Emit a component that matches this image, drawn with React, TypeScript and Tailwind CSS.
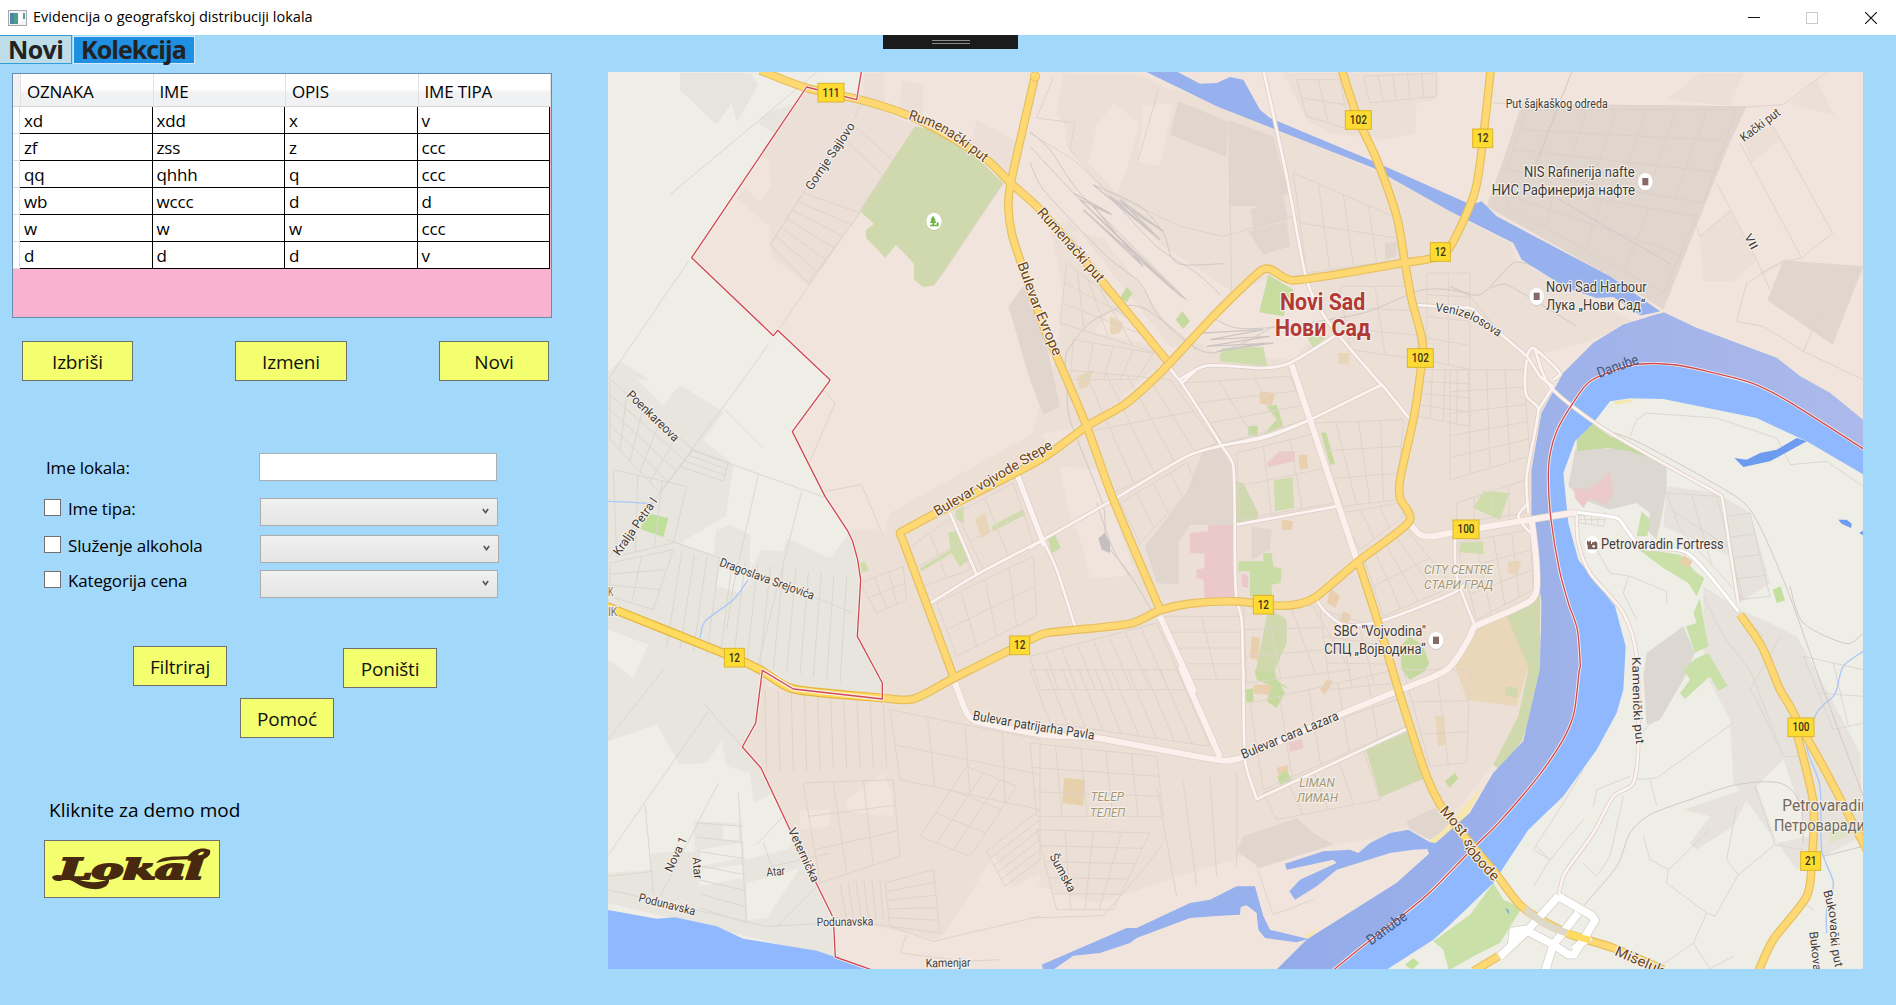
import React from "react";

/* ---------- map geometry helpers ---------- */

// Sheet origins: the map is surveyed in nine sheets, each with local coordinates.
const SHEETS: Record<string, [number, number]> = {
  A: [0, 0], B: [1290, 0], C: [2550, 0],
  D: [0, 930], E: [1290, 930], F: [2550, 930],
  G: [0, 1830], H: [1290, 1830], I: [2550, 1830],
};

function points(s: string): [number, number][] {
  let o: [number, number] = [0, 0];
  const out: [number, number][] = [];
  for (const t of s.trim().split(/\s+/)) {
    if (SHEETS[t]) o = SHEETS[t];
    else {
      const [x, y] = t.split(",").map(Number);
      out.push([x + o[0], y + o[1]]);
    }
  }
  return out;
}
const line = (s: string) => "M" + points(s).map((p) => p.join(" ")).join("L");
const poly = (s: string) => line(s) + "Z";

function curve(s: string) {
  const p = points(s);
  let d = `M${p[0][0]} ${p[0][1]}`;
  for (let i = 0; i < p.length - 1; i++) {
    const a = p[i - 1] ?? p[i], b = p[i], c = p[i + 1], e = p[i + 2] ?? c;
    // Control handles never reach further than a third of their own segment.
    const seg = Math.hypot(c[0] - b[0], c[1] - b[1]);
    const k1 = Math.min(1 / 7, seg / 3 / (Math.hypot(c[0] - a[0], c[1] - a[1]) || 1));
    const k2 = Math.min(1 / 7, seg / 3 / (Math.hypot(e[0] - b[0], e[1] - b[1]) || 1));
    d += `C${b[0] + (c[0] - a[0]) * k1} ${b[1] + (c[1] - a[1]) * k1} ${c[0] - (e[0] - b[0]) * k2} ${c[1] - (e[1] - b[1]) * k2} ${c[0]} ${c[1]}`;
  }
  return d;
}

// Street grid between four corners (clockwise), n lines one way and m the other.
function grid(s: string, n: number, m: number) {
  const [a, b, c, e] = points(s);
  const mix = (p: number[], q: number[], t: number) => [p[0] + (q[0] - p[0]) * t, p[1] + (q[1] - p[1]) * t];
  let d = "";
  for (let i = 0; i <= n && n > 0; i++) {
    const p = mix(a, b, i / n), q = mix(e, c, i / n);
    d += `M${p[0]} ${p[1]}L${q[0]} ${q[1]}`;
  }
  for (let i = 0; i <= m && m > 0; i++) {
    const p = mix(a, e, i / m), q = mix(b, c, i / m);
    d += `M${p[0]} ${p[1]}L${q[0]} ${q[1]}`;
  }
  return d;
}

const BORDER_WEST =
  "A 785,30 770,120 620,82 275,594 520,828 533,812 690,960 D 688,35 577,186 675,380 742,482 758,515 773,570 782,630 772,800 847,940 G 847,88 580,58 487,2 467,160 427,232 483,295 565,470 700,745 706,862 820,902";
const MIDSTREAM =
  "H 905,905 1000,828 1120,735 1200,668 1320,545 I 150,455 265,320 338,212 372,130 388,0 F 391,890 382,780 355,700 328,600 303,450 295,330 300,255 322,180 372,95 420,35 500,0 570,-17 680,-14 800,12 910,42 1020,98 1250,244";
const CITY = `${BORDER_WEST} ${MIDSTREAM} C 1250,30`;

const RIVER =
  "C 640,758 740,805 980,895 1050,950 F 1140,70 1250,160 1250,320 1070,215 920,145 640,88 540,86 480,95 430,160 375,215 340,310 355,460 385,570 495,710 527,830 520,960 I 500,130 440,240 340,380 235,480 130,640 0,765 H 1210,810 1070,900 740,900 830,810 1100,640 1200,550 1215,522 1320,430 I 130,310 220,215 270,0 F 275,700 245,450 245,300 275,130 340,10 C 430,850 520,795";
const CANAL =
  "B 335,30 430,30 510,72 560,70 600,52 640,60 665,105 690,150 720,175 1030,305 1290,420 C 65,435 95,425 140,470 480,650 630,755 575,770 490,712 440,715 350,685 215,600 190,550 0,455 B 1030,325 560,140";
const LAKES = [
  "H 765,582 880,545 960,540 985,550 1020,520 1080,490 1135,480 1200,518 1235,522 1200,560 1192,538 1150,540 1080,550 920,600 860,650 795,690 778,665 810,630 920,580 910,570 770,600",
  "H 35,885 290,775 320,775 480,700 540,690 620,650 675,650 700,740 720,780 835,808 800,818 705,805 685,780 680,730 650,707 632,712 630,735 570,738 480,745 320,805 300,820 210,850 130,858 70,900 40,900",
];
const WATER_OUT = [
  "G 20,720 170,747 225,743 350,770 430,807 650,843 706,862 830,905 20,905",
  "F 853,265 890,270 930,250 980,240 1040,205 1070,215 960,275 880,292",
  "F 1165,450 1190,450 1205,462 1203,475 1175,462",
  "F 1228,490 1245,480 1245,500",
  "I 165,715 175,720 178,735",
];

type Area = [string, string];
const AREAS: Area[] = [
  // settlements west of the border
  ["#e8e5de", "D 24,0 100,20 190,105 240,45 372,128 310,210 400,285 378,440 240,520 340,555 350,480 390,465 450,495 450,600 485,540 550,545 560,505 690,565 740,500 758,515 782,630 772,800 847,940 G 847,88 580,58 487,2 467,160 427,232 483,295 520,370 460,400 450,310 380,290 365,215 320,280 240,285 170,165 24,215"],
  ["#efeee6", "D 360,560 450,600 450,640 420,670 350,650"],
  ["#efeee6", "D 24,780 145,825 100,925 24,870"],
  ["#e6e4dd", "A 240,40 450,40 475,75 410,188 395,130 350,195 240,90"],
  ["#e6e4dd", "A 500,160 590,130 560,250 475,190"],
  ["#e8e5de", "A 30,930 60,905 150,960 30,960"],
  ["#e8e5de", "G 280,455 420,460 435,570 560,540 610,480 690,745 G 706,862 400,790 24,700 24,610 150,600 155,550 285,545"],
  ["#efeee6", "G 295,600 425,585 430,625 300,650"],
  ["#efeee6", "G 370,465 415,465 415,510 370,510"],
  ["#efeee6", "G 440,640 600,595 500,745 440,750"],
  ["#efeee6", "G 300,540 425,520 425,565 300,590"],
  // Sajlovo
  ["#ebdfd7", "A 600,110 640,90 780,125 950,200 875,320 780,450 625,680 515,590 510,500 410,415 440,385 480,430 512,380 505,300 480,290"],
  ["#ebdfd7", "A 790,40 850,40 855,130 790,115"],
  ["#ebdfd7", "A 905,60 970,75 970,190 900,150"],
  ["#ebdfd7", "A 1130,180 1255,250 1232,350 1110,270"],
  // central urban area
  ["#ebdfd6", "B 60,500 120,480 420,860 600,900 1170,870 1290,600 1280,440 700,190 440,90 330,90 B 100,40 80,160 180,310 250,390 500,560 600,640 690,620 350,960 E 170,170 60,235 D 1320,180 870,430 850,500 830,480 750,480 782,630 772,800 847,940 G 847,88 500,50 487,2 467,160 427,232 483,295 700,745 900,790 1010,810 1140,715 1320,650 H 200,700 640,560 1240,480 I 130,280 240,130 F 275,700 245,450 245,300 300,80 C 240,890 400,850 560,790 380,700 200,600 0,440 B 1120,560 900,640 690,620 500,600"],
  ["#ebdfd6", "B 60,500 120,510 410,900 E 170,170 0,200 B 80,890 100,700"],
  ["#ebdfd6", "B 100,45 330,45 420,90 700,190 760,300 800,650 600,700 440,600 250,420 110,260"],
  ["#f1e4dc", "B 250,130 330,190 290,330 260,400 175,310 200,200"],
  ["#f1e4dc", "B 340,140 430,130 390,320 325,305"],
  ["#f1e4dc", "B 0,210 60,250 130,300 250,420 400,560 600,690 470,840 440,830 300,640 150,440 0,280"],
  ["#f1e4dc", "B 600,700 730,650 790,670 840,670 890,780 790,900 560,880 480,830"],
  ["#f1e4dc", "B 190,820 390,860 400,890 300,780 240,750"],
  ["#ebdfd6", "B 760,40 1220,40 1220,120 1160,130 1155,220 1060,240 900,220 830,180"],
  ["#ebdfd6", "B 820,280 1090,390 1270,450 1240,540 1120,600 830,650"],
  ["#f1e4dc", "E 90,290 210,300 310,600 280,620 180,625 160,540 110,400"],
  ["#f1e4dc", "G 740,390 850,310 875,370 880,440 740,425"],
  ["#f1e4dc", "G 600,420 690,420 690,470 600,480"],
  ["#f1e4dc", "G 1095,700 1180,555 1240,650 1320,610 H 20,760 400,690 760,560 860,600 740,730 1050,560 1190,545 1090,640 740,900 G 830,900 706,862 705,745 1020,810"],
  ["#f1e4dc", "H 720,800 1240,480 1190,460 1100,480 960,540 820,600 760,700"],
  // industry
  ["#e1d6ce", "A 1225,740 1270,680 1320,760 E 90,110 40,135 B 0,960"],
  ["#e1d6ce", "B 445,125 592,185 590,292 420,225"],
  ["#e1d6ce", "B 598,182 730,230 775,400 690,440 598,438"],
  ["#e1d6ce", "B 655,515 770,485 780,560 700,585"],
  ["#e1d6ce", "B 660,450 760,410 775,480 670,510"],
  ["#e1d6ce", "B 1065,550 1100,545 1100,590 1065,600"],
  ["#e1d6ce", "C 215,133 890,140 835,260 640,750 480,650 110,440 170,270"],
  ["#e1d6ce", "C 1000,602 1240,620 1148,855 952,722"],
  ["#ebdfd6", "C 750,530 840,450 920,600 850,665 760,665"],
  ["#ebdfd6", "C 650,120 750,40 880,40 840,138"],
  ["#ebdfd6", "C 1020,130 1100,60 1155,170"],
  ["#ebdfd6", "C 870,220 970,200 990,240 905,310"],
  ["#ebdfd6", "C 60,490 180,550 200,590 60,540"],
  ["#e1d6ce", "E 520,240 575,235 610,300 612,465 480,465 445,520 445,645 380,640 345,530 470,370"],
  ["#e1d6ce", "E 665,470 725,480 720,540 665,570"],
  ["#e1d6ce", "H 640,500 800,445 850,490 910,525 690,595 620,545"],
  ["#e1d6ce", "H 1130,455 1215,415 1260,470 1200,510 1140,480"],
  // across the river
  ["#dcd7d1", "F 375,240 440,235 540,240 650,290 650,360 635,440 620,510 590,480 600,430 560,400 480,420 400,390 355,350"],
  ["#e7e3dc", "F 650,350 800,370 900,430 960,640 870,700 840,560 640,470"],
  ["#e7e3dc", "F 760,650 870,720 960,760 1040,800 1130,960 I 1230,250 1240,500 1040,600 850,340 840,150 760,0"],
  ["#dcd7d1", "F 700,770 735,850 700,930 I 630,150 590,165 580,20 F 590,850"],
  ["#e7e3dc", "I 700,420 910,350 850,470 740,540 720,520 780,440"],
  ["#f0efe7", "I 920,350 1000,270 1080,500 980,520"],
  // water meadows and parks
  ["#d0d9ae", "A 945,200 1000,210 1100,265 1210,370 1030,640 1000,677 970,682 942,660 942,612 888,555 856,594 798,535 798,510 822,493 778,453"],
  ["#c9dca0", "B 715,645 790,690 760,770 688,758"],
  ["#c6daa0", "B 290,682 308,700 290,728 270,715"],
  ["#c6daa0", "B 457,755 480,785 460,808 437,780"],
  ["#cfdcab", "B 575,865 700,862 712,920 568,905"],
  ["#cfdcab", "B 830,830 890,830 850,865"],
  ["#e9d6b8", "B 240,770 280,790 270,820 240,825"],
  ["#e9d6b8", "B 925,880 960,880 955,915 925,910"],
  ["#e9d6b8", "E 140,20 190,0 175,50 150,60"],
  ["#e9cfae", "E 690,65 735,70 725,108 688,100"],
  ["#c6daa0", "E 710,110 740,105 760,170 700,195 740,150"],
  ["#c6daa0", "E 655,170 683,168 683,200 655,195"],
  ["#c6daa0", "E 873,190 888,188 915,283 900,285"],
  ["#ebcaca", "E 710,280 750,245 795,245 795,275 715,292"],
  ["#e9cfae", "E 805,255 830,255 835,295 810,300"],
  ["#d0d9ae", "E 618,335 640,340 685,430 680,455 618,465"],
  ["#cfdcab", "E 732,332 788,323 792,415 735,425"],
  ["#ebc8c9", "E 535,465 615,465 618,682 525,685 520,630 498,625 500,600 522,595 525,552 480,550 480,490 535,485"],
  ["#c9dca5", "E 700,550 725,550 730,590 755,598 752,640 725,645 725,680 660,680 660,605 625,605 625,575 700,575"],
  ["#ebc8c9", "E 635,610 655,620 655,655 635,650"],
  ["#e9cfae", "E 755,450 790,455 785,480 755,480"],
  ["#d0d9ae", "E 715,715 770,750 770,820 735,900 740,930 780,960 675,915"],
  ["#e9cfae", "E 665,800 690,805 685,870 660,865"],
  ["#c6daa0", "H 675,0 730,10 765,70 740,115 710,95 725,50 680,30"],
  ["#c6daa0", "H 645,60 670,55 670,95 650,100"],
  ["#e9cfae", "H 672,45 725,45 720,75 672,72"],
  ["#e9cfae", "H 870,60 890,30 908,35 885,75"],
  ["#e9cfae", "E 900,655 930,680 915,715 892,700"],
  ["#e9cfae", "E 940,725 962,735 955,760 930,755"],
  ["#c6daa0", "E 1110,830 1140,800 1180,830 1197,880 1185,905 1140,930 1115,900"],
  ["#ebcaca", "H 775,220 815,208 820,235 780,248"],
  ["#e9cfae", "H 740,295 772,285 775,305 745,315"],
  ["#c6daa0", "H 742,320 770,303 785,330 750,345"],
  ["#e7d0ac", "H 102,325 165,330 160,408 97,400"],
  ["#d0d9ae", "H 1008,240 1135,185 1185,325 1050,383"],
  ["#e9d6b8", "H 1215,140 1243,140 1245,225 1225,230"],
  ["#c6daa0", "H 1245,335 1275,310 1285,325 1258,355"],
  ["#f7e6ae", "H 1195,520 1240,480 1320,390 I 100,350 50,440 H 1215,522"],
  ["#f7e6ae", "H 835,808 825,795 870,775"],
  ["#cfdcab", "D 1065,425 1090,410 1092,460 1070,450"],
  ["#e9d6b8", "D 1125,450 1155,430 1170,490 1145,505"],
  ["#cfdcab", "D 1175,470 1270,418 1275,435 1180,485"],
  ["#cfdcab", "D 1045,490 1078,482 1105,570 1080,592 1055,550 965,605 960,595 1052,540"],
  ["#cfdcab", "D 780,580 795,575 805,602 785,610"],
  ["#bfe09a", "D 140,430 205,445 190,502 120,478"],
  ["#c9dca5", "E 55,510 75,495 92,535 65,552"],
  // right bank quay
  ["#d0d9ae", "F 170,740 250,690 270,660 270,960 I 215,215 150,300 130,285 205,140 235,0"],
  ["#ead6b9", "F 15,880 70,775 170,740 235,890 I 200,110 50,90 20,0"],
  ["#d0d9ae", "I 170,50 205,55 200,85 165,75"],
  ["#cfdcab", "F 100,365 178,370 150,450 70,415"],
  ["#cfdcab", "F 30,520 100,515 100,553 28,548"],
  ["#e9d6b8", "F 175,575 215,575 200,615 172,610"],
  ["#c6daa0", "F 425,160 480,200 560,230 640,280 540,245 470,235 380,245 380,210"],
  ["#ecc9ca", "F 372,355 410,360 470,320 480,300 485,340 490,370 465,405 420,385 400,415 375,385"],
  ["#f7e6ae", "F 490,95 550,88 545,96 500,105"],
  ["#c9e0a8", "F 575,425 600,450 592,500 560,500"],
  ["#c9e0a8", "F 560,535 690,555 740,610 763,625 740,680 715,640 640,595"],
  ["#e9cfae", "F 700,555 728,575 715,595 690,580"],
  ["#c9e0a8", "F 750,685 762,760 775,830 735,850 708,770 740,760 730,730"],
  ["#c9e0a8", "F 735,868 775,850 833,950 I 833,48 805,63 780,20 705,88 690,70 720,30 700,0"],
  ["#c2e09c", "F 968,660 992,650 1005,692 980,700"],
  ["#c9e0a8", "H 1320,735 I 130,640 160,690 215,715 150,820 70,860 0,900 H 1255,897 1240,840 1210,815"],
  ["#c2e09c", "H 1125,885 1150,865 1168,880 1145,900"],
  ["#dde3c4", "I 1140,455 1210,450 1215,490 1140,520"],
];

const STREETS_CITY = [
  grid("D 780,640 910,590 920,690 830,730", 3, 2),
  grid("D 920,540 1060,440 1110,600 970,650", 2, 2),
  grid("D 1070,430 1240,340 1300,520 1150,600", 2, 2),
  grid("D 1010,700 1300,560 1310,740 1070,860", 4, 2),
  grid("G 495,60 850,105 860,290 500,310", 9, 0),
  grid("G 610,340 880,330 900,560 660,640", 3, 3),
  grid("G 870,120 1320,210 1320,420 900,330", 4, 2),
  grid("G 960,500 1100,290 1250,350 1110,560", 3, 3),
  grid("G 1160,545 1320,420 1320,570 1215,650", 1, 5),
  grid("G 855,640 1000,600 1020,790 870,770", 1, 5),
  grid("G 720,640 840,630 850,750 740,750", 5, 0),
  grid("E 0,860 380,760 470,960 30,960", 8, 1),
  grid("H 0,0 440,0 540,230 60,160", 9, 1),
  grid("H 0,220 380,260 400,440 20,440", 5, 3),
  grid("H 20,480 360,490 250,720 80,720", 4, 5),
  grid("H 380,350 620,310 620,590 440,680", 3, 0),
  grid("E 100,0 420,30 560,220 250,370", 5, 2),
  grid("E 270,400 470,280 500,340 330,520", 4, 1),
  grid("E 460,40 780,20 840,150 580,220", 3, 3),
  grid("E 620,250 860,190 910,400 630,450", 3, 2),
  grid("E 850,160 1120,150 1100,390 940,410", 4, 3),
  grid("E 930,430 1110,400 1120,440 990,540", 3, 1),
  grid("E 640,700 850,710 960,900 650,940", 3, 3),
  grid("E 400,740 630,740 640,930 480,930", 2, 4),
  grid("E 1000,560 1130,480 1270,650 1060,740", 4, 2),
  grid("E 870,720 1040,770 1100,940 900,960", 3, 3),
  grid("E 1170,0 1320,0 1320,170 1160,140", 4, 4),
  grid("F 0,0 220,0 240,260 0,330", 4, 5),
  grid("F 20,400 230,330 230,430 20,460", 4, 1),
  grid("F 20,520 240,480 250,660 80,750", 4, 3),
  grid("H 660,100 1100,0 1130,170 700,360", 5, 2),
  grid("H 700,370 1000,240 1050,390 740,450", 4, 1),
  grid("H 1120,0 1320,0 1310,280 1200,290", 2, 3),
  grid("B 790,340 1090,470 1110,600 830,640", 4, 2),
  grid("B 110,610 240,710 380,880 90,790", 4, 3),
  grid("B 130,840 370,880 320,960 120,960", 4, 1),
  grid("B 930,680 1140,680 1170,900 960,870", 2, 3),
  grid("B 1190,640 1320,640 1320,930 1190,900", 2, 4),
  grid("B 800,60 930,60 960,210 830,170", 2, 2),
  grid("B 1000,50 1220,40 1220,110 1020,130", 5, 1),
  grid("A 610,400 780,460 625,670 510,555", 1, 6),
  line("A 755,190 875,300"),
  line("A 725,230 845,345"),
  line("A 790,120 760,180 610,400 510,555"),
  line("A 875,320 535,810"),
  line("A 1210,370 1000,680"),
  line("D 670,60 705,100 630,275"),
  line("D 675,365 785,345 850,500"),
  line("B 385,90 325,300"),
  line("B 0,220 130,300 240,400 450,500 580,530 790,470"),
  line("B 595,180 605,700"),
  line("B 70,55 20,175 135,190 120,270 230,400"),
  line("C 870,250 1055,595 1148,520 970,200"),
  line("C 800,370 915,590 960,690"),
  line("C 1000,605 890,670 860,785 940,800 1060,875 1240,960"),
  line("C 1060,875 1105,770"),
  line("C 930,640 1000,605 1055,595"),
  line("C 130,130 215,133 890,142 1000,135 1130,37"),
  line("C 740,500 750,530 840,455"),
  line("C 0,680 60,710 150,820"),
  line("G 705,745 870,770 1000,815 1320,740"),
  line("G 920,795 900,850 1100,875 1200,870"),
  line("H 0,745 220,738 340,600 400,520"),
  line("H 680,590 730,735 850,690"),
];
const STREETS_PLANT = [
  grid("C 230,150 860,150 760,430 170,330", 7, 3),
  grid("C 170,370 740,470 640,700 170,440", 4, 2),
];
const STREETS_OUT = [
  grid("D 30,30 280,240 180,370 30,210", 5, 4),
  grid("D 280,240 385,280 370,335 240,290", 1, 3),
  grid("D 40,300 260,350 220,520 50,560", 3, 1),
  grid("D 30,580 220,540 160,720 30,680", 2, 3),
  grid("D 245,550 740,620 720,940 200,830", 13, 0),
  grid("G 290,460 430,470 440,760 300,715", 0, 6),
  line("A 650,38 210,405"),
  line("A 265,605 30,950 D 20,30"),
  line("A 505,855 430,960 D 175,375 30,560"),
  line("D 375,120 490,235"),
  line("D 270,240 680,385"),
  line("D 475,315 400,650 380,780"),
  line("D 605,365 470,900"),
  line("D 200,510 360,565 760,730"),
  line("G 325,125 25,555"),
  line("G 24,210 190,0"),
  line("G 310,100 430,235"),
  line("G 355,340 180,680"),
  line("G 135,405 160,670"),
  line("G 24,660 500,770 700,760"),
  line("G 24,620 160,605"),
  line("G 415,370 440,760"),
  line("G 550,440 470,525"),
  line("G 490,520 515,590 690,550"),
  line("G 530,770 660,640"),
  grid("F 380,440 470,430 460,470 390,460", 4, 2),
  grid("F 650,370 800,380 880,690 690,480", 2, 2),
  grid("F 830,440 900,430 960,680 870,690", 1, 4),
  line("F 540,200 560,150 590,130 800,145 980,205 1020,285 1130,275 1240,350"),
  line("F 440,540 480,610 540,620 650,665 650,700"),
  line("F 535,620 520,670 560,750"),
  line("F 760,680 820,800 900,900 I 1000,260 1060,260"),
  line("F 990,800 900,960 I 920,90 980,220"),
  line("I 560,200 640,130 700,0"),
  line("I 550,330 620,325 850,160"),
  line("I 600,330 620,405"),
  line("I 540,320 440,360 430,410"),
  line("I 520,380 480,560 440,620 400,580"),
  line("I 260,530 300,570 400,450"),
  line("I 400,300 340,400 250,540 300,570 250,650"),
  line("I 580,500 600,570 655,600 650,640 770,730 730,820 620,897"),
  line("I 655,600 780,480"),
  line("I 770,730 795,740 865,615 830,570 860,410"),
  line("I 865,615 975,525 1060,540"),
  line("I 975,525 915,350"),
  line("I 730,820 780,897 850,860"),
  line("I 1060,700 1090,720"),
  line("F 870,730 900,760 940,800"),
  grid("F 1060,860 1240,900 1240,1060 1150,1080", 2, 2),
];
const RAIL = [
  "B 0,215 60,270 150,400 470,720",
  "B 0,260 160,430 440,700 470,720",
  "B 0,310 40,390 230,590 330,670 380,760 460,840 540,880 640,850 730,800",
  "B 190,375 330,440 400,520 440,610 580,612",
  "B 230,400 380,560 500,640 570,705",
  "B 110,960 110,880 180,790 280,740 340,745 420,800 500,870",
  "B 540,770 620,805 760,800 1000,760 1180,690 1320,700",
  "C 0,680 90,705 190,610 250,620 310,645",
  "C 120,685 170,675 380,800",
  "C 365,37 250,330",
  "C 320,415 665,615",
  "E 110,40 120,150 220,410 230,520 290,600 370,730",
  "E 200,400 250,540 300,620",
  "F 460,180 560,215 790,340 900,420 1000,630 1120,960 I 1240,380",
  "F 1020,650 1060,760 1190,822 1240,790",
  "I 395,715 500,590 540,490 600,435 720,390 860,345 990,340 1050,400 1060,520",
  "I 1120,560 1240,530",
];
const YARD = [
  "B 130,400 240,460 150,420 460,715 200,470 430,690 160,450 340,620 190,440 245,465",
  "B 190,375 390,540 270,420 400,515 240,410 380,530",
  "B 520,820 700,810 540,840 720,830 530,860 730,850 560,875 700,850",
];

const WHITE_THIN = [
  "B 410,910 430,940 E 455,40 575,228 610,290 615,600 620,690 635,750 640,960 H 640,0 645,270 677,380 680,388 690,384 1135,175",
  "E 455,40 500,0 B 450,960 530,918 700,925 780,910 920,825",
  "B 700,30 770,350 830,660 890,780 1040,960 E 1060,50 1145,155",
  "E 0,535 40,510 250,390 470,260 575,228 700,205 840,150 1055,45",
  "E 575,228 720,195 840,150",
  "E -40,300 40,510 80,600 135,770",
  "E 620,465 920,410",
  "E 860,690 880,720 940,765 1050,755 1270,670 1320,630",
  "F 15,500 20,620 75,770",
  "D 1050,430 1130,615",
  "D 1245,310 1330,530",
  "D 985,705 1130,615 1330,510",
  "F 255,-60 300,50 450,170 620,270 800,370 815,380 840,540 865,700",
  "F 380,430 385,520 420,610 520,730 560,860 I 565,220 550,340 490,380 430,490 345,610 325,680",
  "B 1150,735 1220,740 1320,745 C 90,770 160,830 230,890 270,950 F 310,50",
  "C 230,890 250,865 330,940 310,960",
  "C 230,900 225,955 F 230,80 265,120 230,320 235,430",
  "F 265,120 310,50",
  "F 235,400 205,440 240,490",
];
const WHITE_WIDE = [
  "B 785,915 E 840,150 980,570",
  "E 1138,460 1170,495 1210,500 F 0,490 240,450 380,428",
  "E 390,740 490,960 H 455,0 570,262",
  "G 1065,40 1100,130 1130,155 1330,195 H 200,205 570,272 640,262 930,135 1100,65 1250,0 E 1320,800 F 75,770 245,690 260,600 245,450",
];
const YELLOW = [
  "A 480,32 620,85 780,120 920,165 1040,225 1160,300 1232,370 1320,450 B 220,670 410,902",
  "A 1305,50 1232,370 1225,440 1235,520 1260,600 B 40,800 80,890 E 170,170 250,390 390,720",
  "D 1062,925 908,510 900,490 920,478 1000,435 1320,270 E 170,170 290,100 400,0 B 550,770 690,635 720,628 790,662 1120,610 1230,590 1270,545 C 75,395 100,230 122,30",
  "B 935,30 985,180 1040,300 1100,470 1125,610 1145,720 1178,850 1170,950 E 1150,150 1110,330 1110,385 1138,455 985,575 860,680 810,702 740,708 620,695 480,702 390,722 300,762 50,790 0,810 D 1259,827 1062,925 G 940,88 850,85",
  "E 985,575 1045,760 1105,960 H 1140,170 1190,320 1240,420 I 60,520 140,615 220,715 350,790 490,835 640,900",
  "F 870,735 935,830 990,960 I 1020,110 1053,173 1130,310 1250,540",
  "I 1040,190 1090,400 1085,574 1070,680 970,810 925,905",
  "I 145,860 70,905",
];
const INTERCHANGE = [
  "I 325,680 225,790 150,860",
  "I 325,680 425,738 435,752 372,855 355,855 310,825 225,780 190,785 185,830",
  "I 385,730 310,825 285,905",
  "I 420,800 370,840",
];

/* ---------- map labels ---------- */

type LabelProps = {
  s: string; x: number; y: number; w: number; t: string;
  size?: number; rot?: number; fill?: string; weight?: number; italic?: boolean;
};
function Label({ s, x, y, w, t, size = 38, rot = 0, fill = "#403d3b", weight = 400, italic }: LabelProps) {
  const [ox, oy] = SHEETS[s];
  return (
    <text
      transform={`translate(${x + ox} ${y + oy}) rotate(${rot})`}
      textLength={w} lengthAdjust="spacingAndGlyphs" fontSize={size} fill={fill}
      fontWeight={weight} fontStyle={italic ? "italic" : "normal"}
      stroke="#f7f0ea" strokeWidth={7} strokeLinejoin="round" paintOrder="stroke"
    >
      {t}
    </text>
  );
}
function PathLabel({ id, p, t, size = 38, fill = "#403d3b", halo = "#f7f0ea", len }: { id: string; p: string; t: string; size?: number; fill?: string; halo?: string; len: number }) {
  return (
    <>
      <path id={id} d={curve(p)} fill="none" />
      <text fontSize={size} fill={fill} stroke={halo} strokeWidth={7} strokeLinejoin="round" paintOrder="stroke">
        <textPath href={`#${id}`} textLength={len} lengthAdjust="spacingAndGlyphs">{t}</textPath>
      </text>
    </>
  );
}
function Shield({ s, x, y, t }: { s: string; x: number; y: number; t: string }) {
  const [ox, oy] = SHEETS[s];
  const w = t.length === 3 ? 78 : 60;
  return (
    <g transform={`translate(${x + ox} ${y + oy})`}>
      <rect x={-w / 2} y={-28} width={w} height={56} fill="#fddb33" stroke="#dcb42c" strokeWidth={3} />
      <text x={-(t.length * 17) / 2} y={12} textLength={t.length * 17} lengthAdjust="spacingAndGlyphs" fontSize={36} fontWeight={500} fill="#3a3318">{t}</text>
    </g>
  );
}
function Poi({ s, x, y }: { s: string; x: number; y: number }) {
  const [ox, oy] = SHEETS[s];
  return (
    <g transform={`translate(${x + ox} ${y + oy})`}>
      <ellipse rx={23} ry={28} fill="#d8ccc5" cy={2} />
      <ellipse rx={22} ry={26} fill="#fff" />
      <rect x={-9} y={-11} width={18} height={22} fill="#866a66" />
    </g>
  );
}

function CityMap() {
  const brown = "#6b4413";
  const olive = "#a09878";
  return (
    <svg className="block h-[897px] w-[1255px]" viewBox="24 37 3765 2691" preserveAspectRatio="none" fontFamily="Roboto, sans-serif">
      <defs>
        <clipPath id="city"><path d={poly(CITY)} /></clipPath>
        <linearGradient id="tint" x1="0" y1="0" x2="1" y2="0">
          <stop offset="0" stopColor="#92abe9" />
          <stop offset="1" stopColor="#acb9ea" />
        </linearGradient>
      </defs>
      <rect x="24" y="37" width="3765" height="2691" fill="#efeee6" />
      <path d={poly(CITY)} fill="#f1e4dc" />
      {AREAS.map(([c, p], i) => <path key={i} d={poly(p)} fill={c} />)}
      <g fill="none" strokeWidth={3}>
        <path d={STREETS_CITY.join("")} stroke="#dfd3ca" />
        <path d={STREETS_PLANT.join("")} stroke="#dbcfc7" />
        <path d={STREETS_OUT.join("")} stroke="#dad7d0" />
        <g stroke="#d0c9c6">{RAIL.map((p, i) => <path key={i} d={curve(p)} />)}</g>
        <g stroke="#cdc5c4" strokeWidth={4}>{YARD.map((p, i) => <path key={i} d={line(p)} />)}</g>
      </g>
      <path d={poly("E 205,505 225,490 240,520 240,550 215,540")} fill="#c6bfc2" />
      <path d={poly(RIVER)} fill="#8fb8ff" />
      <path d={poly(RIVER)} fill="url(#tint)" clipPath="url(#city)" />
      <path d={poly(CANAL)} fill="#97b1ee" />
      {LAKES.map((p, i) => <path key={i} d={poly(p)} fill="#97b0ee" />)}
      {WATER_OUT.map((p, i) => <path key={i} d={poly(p)} fill={i === 0 ? "#90b8ff" : "#6d9bf0"} />)}
      <g fill="none" stroke="#a9c8f8" strokeWidth={4}>
        <path d={curve("D 24,395 100,398 160,402")} />
        <path d={curve("D 445,630 400,690 315,755 300,805")} />
        <path d={curve("F 1240,845 1180,890 1160,960 I 1150,80 1100,130 1070,230 1110,350 1115,540 1150,640 1130,720 1130,790")} />
      </g>
      <g fill="none" strokeLinejoin="round">
        <g stroke="#ddd0c9" strokeWidth={13}>{WHITE_THIN.map((p, i) => <path key={i} d={curve(p)} />)}</g>
        <g stroke="#ddd0c9" strokeWidth={22}>{WHITE_WIDE.map((p, i) => <path key={i} d={curve(p)} />)}</g>
        <g stroke="#fcf4f1" strokeWidth={8}>{WHITE_THIN.map((p, i) => <path key={i} d={curve(p)} />)}</g>
        <g stroke="#fcf0ed" strokeWidth={18}>{WHITE_WIDE.map((p, i) => <path key={i} d={curve(p)} />)}</g>
        <path d={curve("F 380,428 500,445 530,480 580,535 715,552 865,725")} stroke="#dcd8d2" strokeWidth={14} />
        <path d={curve("F 380,428 500,445 530,480 580,535 715,552 865,725")} stroke="#fff" strokeWidth={9} />
        <path d={line("C 570,770 640,757")} stroke="#f1e4dc" strokeWidth={5} />
        <path d={curve("D 20,710 403,864 480,900 G 580,58 850,85")} stroke="#e3b63f" strokeWidth={27} />
        <path d={curve("D 20,710 403,864 480,900 G 580,58 850,85")} stroke="#ffdb60" strokeWidth={20} />
        <path d={line("G 487,2 580,58 850,88")} stroke="#fbe9cf" strokeWidth={12} />
        <g stroke="#e6bf5e" strokeWidth={26}>{YELLOW.map((p, i) => <path key={i} d={curve(p)} />)}</g>
        <g stroke="#fdd873" strokeWidth={19}>{YELLOW.map((p, i) => <path key={i} d={curve(p)} />)}</g>
        <g stroke="#d6d2ca" strokeWidth={28}>{INTERCHANGE.map((p, i) => <path key={i} d={line(p)} />)}</g>
        <g stroke="#fff" strokeWidth={23}>{INTERCHANGE.map((p, i) => <path key={i} d={line(p)} />)}</g>
        <path d={curve("I 225,718 280,760 350,790")} stroke="#ded8c6" strokeWidth={22} />
        <path d={line("I 350,790 420,812")} stroke="#ffdb60" strokeWidth={20} />
        <g stroke="#f7f2ee" strokeWidth={9}>
          <path d={line(BORDER_WEST)} />
          <path d={curve(MIDSTREAM)} />
        </g>
        <g stroke="#cf4a52" strokeWidth={4}>
          <path d={line(BORDER_WEST)} />
          <path d={curve(MIDSTREAM)} />
        </g>
      </g>
      <circle cx="1305" cy="50" r="14" fill="#fdd873" stroke="#e6bf5e" strokeWidth="3" />

      {/* park marker */}
      <g transform="translate(1002 485)">
        <ellipse rx="23" ry="27" cy="2" fill="#bcc69d" />
        <ellipse rx="23" ry="26" fill="#fff" />
        <path d="M-3-17L5-5H3L7 5H1V10H8V6L11 1L14 6V15H-12V10H-5V5H-12L-8-5H-10Z" fill="#6fb543" />
      </g>
      <Poi s="C" x={586} y={366} />
      <Poi s="C" x={260} y={710} />
      <Poi s="E" x={1218} y={812} />
      <g transform="translate(2976 1455)">
        <ellipse rx="22" ry="26" fill="#fff" />
        <path d="M-15-12H-11V-9H-7V-12H-3V-2H0V-7H6L10-11L16-5V14H-13V0H-15Z" fill="#7a5f5b" />
        <circle cx="5" cy="5" r="4" fill="#fff" />
      </g>

      <Shield s="A" x={693} y={99} t="111" />
      <Shield s="B" x={985} y={181} t="102" />
      <Shield s="C" x={98} y={236} t="12" />
      <Shield s="B" x={1231} y={577} t="12" />
      <Shield s="B" x={1171} y={895} t="102" />
      <Shield s="F" x={48} y={479} t="100" />
      <Shield s="E" x={700} y={705} t="12" />
      <Shield s="D" x={1259} y={827} t="12" />
      <Shield s="D" x={403} y={864} t="12" />
      <Shield s="I" x={1053} y={173} t="100" />
      <Shield s="I" x={1082} y={574} t="21" />

      <PathLabel id="l1" p="A 924,178 1000,205 1075,250 1165,320" len={264} t="Rumenački put" fill={brown} size={42} />
      <PathLabel id="l2" p="B 20,460 100,550 215,682" len={280} t="Rumenački put" fill={brown} size={42} />
      <PathLabel id="l3" p="A 1252,612 1290,720 B 20,770 75,900" len={300} t="Bulevar Evrope" fill={brown} size={42} />
      <Label s="D" x={1012} y={440} w={404} rot={-30.5} t="Bulevar vojvode Stepe" fill={brown} size={42} />
      <PathLabel id="l4" p="H 1228,425 1300,510 I 50,546 150,658" len={270} t="Most slobode" fill={brown} size={42} />
      <PathLabel id="l5" p="I 492,855 550,880 700,945" len={155} t="Mišeluk" fill={brown} size={42} />
      <Label s="A" x={635} y={394} w={235} rot={-56} t="Gornje Sajlovo" size={37} />
      <Label s="C" x={167} y={145} w={306} t="Put šajkaškog odreda" size={37} />
      <Label s="C" x={882} y={248} w={140} rot={-37} t="Kački put" size={37} />
      <Label s="C" x={882} y={530} w={48} rot={62} t="VII" size={34} />
      <Label s="C" x={222} y={353} w={332} t="NIS Rafinerija nafte" size={44} />
      <Label s="C" x={125} y={406} w={430} t="НИС Рафинерија нафте" size={44} />
      <Label s="C" x={288} y={698} w={302} t="Novi Sad Harbour" size={44} />
      <Label s="C" x={288} y={751} w={298} t="Лука „Нови Сад“" size={44} />
      <PathLabel id="l6" p="B 1215,755 1275,765 1330,785 1410,835" len={208} t="Venizelosova" size={37} />
      <Label s="B" x={750} y={751} w={256} t="Novi Sad" size={70} weight={700} fill="#b23a36" />
      <Label s="B" x={735} y={830} w={286} t="Нови Сад" size={70} weight={700} fill="#b23a36" />
      <Label s="D" x={78} y={78} w={202} rot={44} t="Poenkareova" size={37} />
      <Label s="D" x={58} y={560} w={202} rot={-55} t="Kralja Petra I" size={37} />
      <Label s="D" x={356} y={588} w={300} rot={20} t="Dragoslava Srejovića" size={37} />
      <Label s="D" x={24} y={680} w={16} t="K" size={37} fill="#7c7460" />
      <Label s="D" x={24} y={738} w={28} t="IK" size={37} fill="#7c7460" />
      <Label s="F" x={453} y={538} w={368} t="Petrovaradin Fortress" size={44} />
      <Label s="E" x={1182} y={612} w={208} t="CITY CENTRE" size={40} italic fill={olive} />
      <Label s="E" x={1182} y={658} w={208} t="СТАРИ ГРАД" size={40} italic fill={olive} />
      <Label s="E" x={911} y={799} w={277} t={'SBC "Vojvodina"'} size={44} />
      <Label s="E" x={883} y={852} w={304} t="СПЦ „Војводина“" size={44} />
      <PathLabel id="l7" p="G 1117,150 1290,180 1494,212" len={369} t="Bulevar patrijarha Pavla" size={40} />
      <Label s="H" x={640} y={268} w={312} rot={-22.5} t="Bulevar cara Lazara" size={40} />
      <Label s="H" x={182} y={394} w={100} t="TELEP" size={40} italic fill={olive} />
      <Label s="H" x={180} y={441} w={106} t="ТЕЛЕП" size={40} italic fill={olive} />
      <Label s="H" x={808} y={352} w={106} t="LIMAN" size={40} italic fill={olive} />
      <Label s="H" x={800} y={396} w={124} t="ЛИМАН" size={40} italic fill={olive} />
      <Label s="H" x={58} y={560} w={125} rot={62} t="Šumska" size={37} />
      <Label s="G" x={215} y={610} w={112} rot={-65} t="Nova 1" size={36} />
      <Label s="G" x={277} y={563} w={66} rot={85} t="Atar" size={36} />
      <Label s="G" x={500} y={620} w={56} rot={-5} t="Atar" size={36} />
      <Label s="G" x={563} y={482} w={175} rot={65} t="Veternička" size={36} />
      <Label s="G" x={114} y={695} w={174} rot={14} t="Podunavska" size={36} />
      <Label s="G" x={650} y={770} w={170} rot={-1} t="Podunavska" size={36} />
      <Label s="G" x={977} y={893} w={135} rot={-1} t="Kamenjar" size={36} />
      <g>
        <text transform="translate(2998 955) rotate(-20)" textLength={128} lengthAdjust="spacingAndGlyphs" fontSize={44} fill="#46577f">Danube</text>
        <text transform="translate(2313 2658) rotate(-36)" textLength={138} lengthAdjust="spacingAndGlyphs" fontSize={44} fill="#46577f">Danube</text>
      </g>
      <PathLabel id="l8" p="F 546,862 548,930 I 550,130 560,235" len={262} t="Kamenički put" size={36} />
      <Label s="I" x={997} y={425} w={262} t="Petrovaradin" size={50} fill="#6f6a5c" />
      <Label s="I" x={972} y={485} w={298} t="Петроварадин" size={50} fill="#6f6a5c" />
      <PathLabel id="l9" p="I 1120,665 1138,740 1142,820 1157,900" len={232} t="Bukovački put" size={36} />
      <PathLabel id="l10" p="I 1078,787 1090,900 1100,1030" len={224} t="Bukovački put" size={36} />
    </svg>
  );
}

/* ---------- form controls ---------- */

const rows = [
  ["xd", "xdd", "x", "v"],
  ["zf", "zss", "z", "ccc"],
  ["qq", "qhhh", "q", "ccc"],
  ["wb", "wccc", "d", "d"],
  ["w", "w", "w", "ccc"],
  ["d", "d", "d", "v"],
];

function Button({ className, children }: { className: string; children: React.ReactNode }) {
  return (
    <button className={`flex h-10 items-center justify-center border border-[#707070] bg-[#f3ff6e] pt-[3px] text-[19px] tracking-[-0.01em] text-[#111] ${className}`}>
      {children}
    </button>
  );
}

function Combo({ className = "w-[238px]" }: { className?: string }) {
  return (
    <div className={`flex h-7 shrink-0 items-center justify-end border border-[#acacac] bg-linear-to-b from-[#f0f0f0] to-[#e5e5e5] pr-2 pb-0.5 ${className}`}>
      <svg className="h-[7px] w-[7px]" viewBox="0 0 7 7"><path d="M.8 1L3.5 4.6L6.2 1" fill="none" stroke="#555" strokeWidth="1.6" /></svg>
    </div>
  );
}

function CheckRow({ label, className }: { label: string; className: string }) {
  return (
    <div className={`flex h-7 items-start ${className}`}>
      <span className="mt-px h-[17px] w-[17px] shrink-0 border border-[#707070] bg-white" />
      <span className="ml-[7px] w-[192px] leading-[22px]">{label}</span>
      <Combo className={label.startsWith("Slu") ? "w-[239px]" : "w-[238px]"} />
    </div>
  );
}

function LokalLogo() {
  return (
    <svg className="h-[46px] w-[164px]" viewBox="0 0 164 46" fill="#48290f">
      <text x="9" y="33" textLength="144" lengthAdjust="spacingAndGlyphs" fontFamily="DejaVu Serif, serif" fontWeight="700" fontStyle="italic" fontSize="28" stroke="#48290f" strokeWidth="2.2">Lokal</text>
      <path d="M2 31C6 27 14 30 22 31C36 37 46 38 59 33C60 40 52 44 42 43C30 42 24 34 16 33C10 36 3 36 2 31Z" />
      <path d="M106 17C112 9 124 11 138 10C144 2 154 1 160 4C162 10 154 15 146 14C136 13 120 13 106 17ZM148 9C151 10 154 8 154 6C151 5 149 7 148 9Z" fillRule="evenodd" />
    </svg>
  );
}

export default function App() {
  return (
    <div className="flex h-[1005px] w-[1896px] flex-col overflow-hidden bg-[#a2d8fa] font-['Open_Sans','Noto_Sans',sans-serif] text-black">
      <header className="flex h-[35px] shrink-0 items-center bg-white">
        <svg className="ml-2 h-4 w-[19px]" viewBox="0 0 19 16">
          <rect x=".5" y=".5" width="18" height="15" fill="#f4f4f4" stroke="#a5a9ad" />
          <rect x="2" y="3" width="8" height="11" fill="#4f9c8c" />
          <rect x="2" y="3" width="4" height="11" fill="#4a86a8" />
          <rect x="11" y="3" width="3" height="11" fill="#fff" />
          <rect x="15" y="3" width="2" height="6" fill="#5aa893" />
        </svg>
        <span className="-mt-0.5 ml-[6px] text-[14.5px] tracking-[0.001em]">Evidencija o geografskoj distribuciji lokala</span>
        <div className="ml-auto flex items-center pr-[19px]">
          <svg className="h-3 w-3" viewBox="0 0 12 12"><path d="M0 5.5H12" stroke="#111" /></svg>
          <svg className="ml-[46px] h-3 w-3" viewBox="0 0 12 12"><rect x=".5" y=".5" width="11" height="11" fill="none" stroke="#c9c9c9" /></svg>
          <svg className="ml-[47px] h-3 w-3" viewBox="0 0 12 12"><path d="M0 0L12 12M12 0L0 12" stroke="#111" strokeWidth="1.2" /></svg>
        </div>
      </header>

      <main className="relative flex flex-1">
        <section className="flex w-[608px] shrink-0 flex-col text-[17px] tracking-[-0.01em]">
          <nav className="flex h-[29px] items-start gap-px text-[25px] leading-[27px] font-bold tracking-[-0.025em] text-[#222]">
            <div className="h-[29px] w-[72px] border border-l-0 border-[#2f9fd9] bg-[#bfdde9] pl-2">Novi</div>
            <div className="mt-px h-[28px] w-[122px] border border-white/80 bg-[#1e8fe1] pl-[7px] leading-[25px] tracking-[-0.037em]">Kolekcija</div>
          </nav>

          <div className="mt-[9px] ml-3 h-[245px] w-[540px] border border-[#688caf] bg-[#f9b2d0]">
            <div className="flex h-[33px] border-b border-[#d5d5d5] bg-linear-to-b from-white from-45% to-[#f0f1f3] to-60%">
              <div className="w-2 border-r border-[#e4dfe2] bg-[#f1f1f3]" />
              {["OZNAKA", "IME", "OPIS", "IME TIPA"].map((h) => (
                <div key={h} className="w-[132.5px] border-r border-[#dfe1e4] pl-[6px] leading-[35px] tracking-[-0.01em]">{h}</div>
              ))}
            </div>
            {rows.map((r, i) => (
              <div key={i} className="flex h-[27px] bg-[#f9b2d0]">
                <div className="w-[7px] border-r border-b border-[#dedede] bg-white" />
                {r.map((c, j) => (
                  <div key={j} className="w-[132.5px] border-r border-b border-black bg-white pl-1 leading-[27px]">{c}</div>
                ))}
              </div>
            ))}
          </div>

          <div className="mt-[23px] ml-[22px] flex w-[527px]">
            <Button className="w-[111px]">Izbriši</Button>
            <Button className="ml-[102px] w-[112px]">Izmeni</Button>
            <Button className="ml-[92px] w-[110px]">Novi</Button>
          </div>

          <div className="mt-[72px] flex h-7 items-center">
            <span className="ml-[46px] w-[213px] pt-0.5">Ime lokala:</span>
            <input className="h-7 w-[238px] border border-[#abadb3] bg-white" />
          </div>
          <CheckRow className="mt-[17px] ml-[44px]" label="Ime tipa:" />
          <CheckRow className="mt-[9px] ml-[44px]" label="Služenje alkohola" />
          <CheckRow className="mt-[7px] ml-[44px]" label="Kategorija cena" />

          <div className="mt-12 ml-[133px] flex items-start">
            <Button className="w-[94px]">Filtriraj</Button>
            <Button className="mt-[2px] ml-[116px] w-[94px]">Poništi</Button>
          </div>
          <Button className="mt-[10px] ml-[240px] w-[94px]">Pomoć</Button>

          <div className="mt-[59px] ml-[49px] text-[19px] leading-[26px] tracking-[0em]">Kliknite za demo mod</div>
          <button className="mt-[17px] ml-[44px] flex h-[58px] w-[176px] items-center justify-center border border-[#707070] bg-[#f3ff6e]">
            <LokalLogo />
          </button>
        </section>

        <div className="mt-[37px] h-[897px] overflow-hidden"><CityMap /></div>

        <div className="absolute top-0 left-[883px] flex h-[14px] w-[135px] flex-col items-center justify-center gap-0.5 bg-[#1b1b1c]">
          <span className="h-px w-[38px] bg-[#8a8a8a]" />
          <span className="h-px w-[38px] bg-[#8a8a8a]" />
        </div>
      </main>
    </div>
  );
}
